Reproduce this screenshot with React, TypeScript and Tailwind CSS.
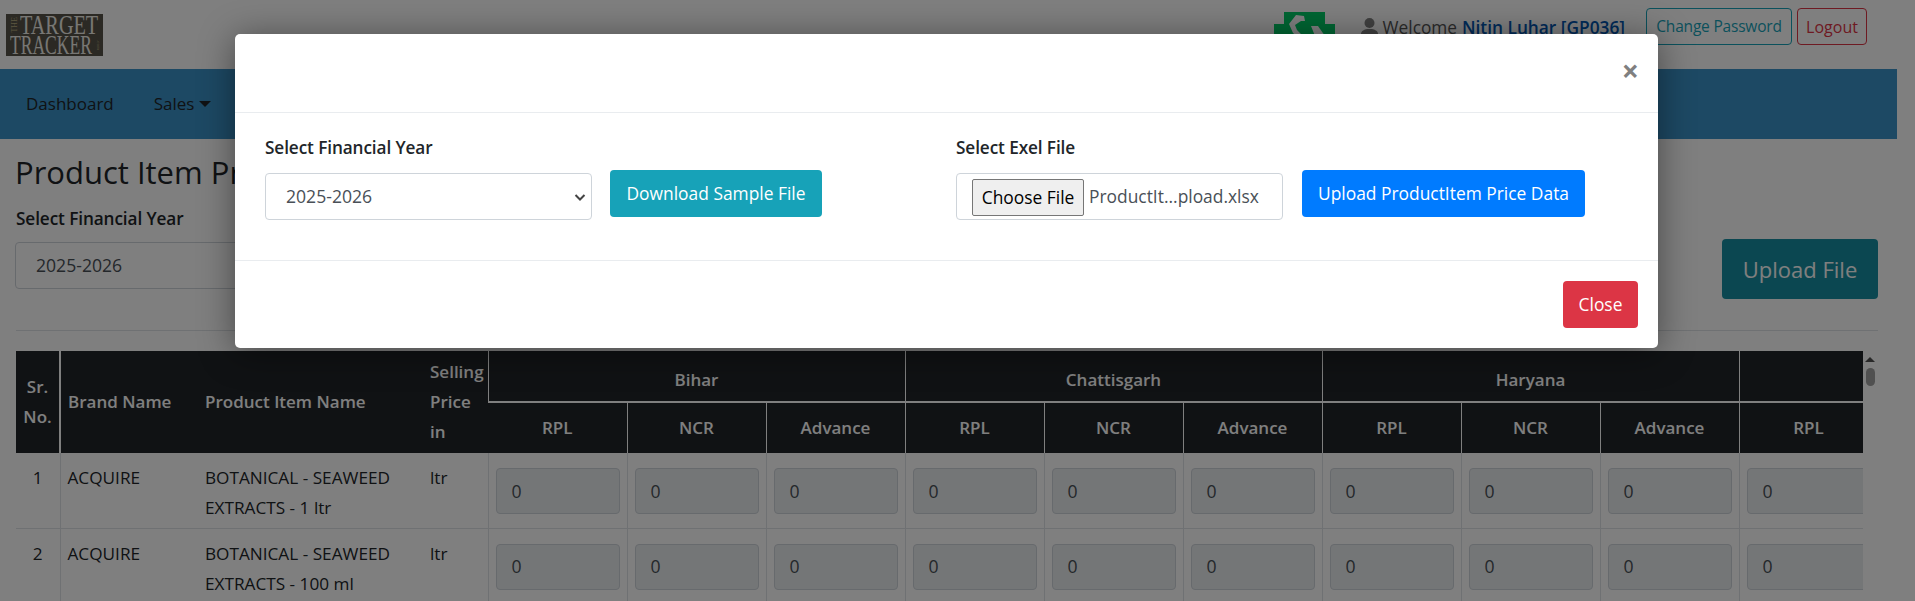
const states = ["Bihar", "Chattisgarh", "Haryana", ""]
const subCols = ["RPL", "NCR", "Advance"]

const rows = [
  { sr: 1, brand: "ACQUIRE", item: "BOTANICAL - SEAWEED EXTRACTS - 1 ltr", unit: "ltr" },
  { sr: 2, brand: "ACQUIRE", item: "BOTANICAL - SEAWEED EXTRACTS - 100 ml", unit: "ltr" },
]

function Logo() {
  return (
    <div className="flex h-[42px] w-[97px] flex-col justify-center bg-[#565248] pl-[4px] font-['Liberation_Serif',serif] text-[#f0efe8]">
      <div className="flex h-[20px] items-center">
        <span className="w-[10px] rotate-180 text-[8px] leading-[10px] text-[#b8ad80] [writing-mode:vertical-rl]">THE</span>
        <span className="origin-left scale-x-[.75] whitespace-nowrap text-[27px] leading-[20px]">TARGET</span>
      </div>
      <div className="flex h-[20px] items-center">
        <span className="w-[86px] origin-left scale-x-[.65] whitespace-nowrap text-[27px] leading-[20px]">TRACKER</span>
        <span className="text-[5px] leading-none text-[#b8ad80] [writing-mode:vertical-rl]">.com</span>
      </div>
    </div>
  )
}

function GreenMark() {
  return (
    <svg width="61" height="30" viewBox="0 0 61 30" className="mt-[12px]">
      <path d="M10 0h41v12h10v18H0V12h10z" fill="#00cc66" />
      <path d="M22 3l-7 9 4 9 6 5 3-3-5-5-2-5 6-4 4 0-1-5z" fill="#fff" />
      <path d="M37 14l7 0 7 10-4 4-6-4z" fill="#fff" />
    </svg>
  )
}

function UserIcon() {
  return (
    <svg width="17" height="20" viewBox="0 0 17 20" className="mr-[5px]">
      <circle cx="8.5" cy="5" r="5" fill="#808080" />
      <path d="M0 20v-4c0-3 3-5 8.5-5s8.5 2 8.5 5v4z" fill="#808080" />
    </svg>
  )
}

export default function App() {
  return (
    <div className="relative h-[601px] overflow-hidden bg-white font-['Open_Sans',sans-serif] text-[17px] leading-[1.5] text-[#212529]">
      <div className="w-[1897px]">
        <header className="flex h-[69px] items-start pl-[6px]">
          <div className="mt-[14px]">
            <Logo />
          </div>
          <div className="ml-auto flex items-start">
            <GreenMark />
            <div className="ml-[26px] mt-[15px] flex items-center text-[17.3px] text-[#555]">
              <UserIcon />
              <span>Welcome</span>
              <b className="ml-[5px] font-semibold text-[#0056b3]">Nitin Luhar [GP036]</b>
            </div>
            <button className="ml-[21px] mt-[8px] h-[37px] w-[146px] rounded border border-[#17a2b8] text-[15.5px] tracking-[-0.2px] text-[#17a2b8]">
              Change Password
            </button>
            <button className="ml-[5px] mr-[30px] mt-[8px] h-[37px] w-[70px] rounded border border-[#dc3545] text-[16px] text-[#dc3545]">
              Logout
            </button>
          </div>
        </header>

        <nav className="flex h-[70px] items-center gap-[40px] bg-[#3a93c8] pl-[26px] text-[17px]">
          <span>Dashboard</span>
          <span className="flex items-center gap-[5px]">
            Sales
            <span className="border-x-[6px] border-t-[6px] border-x-transparent border-t-[#212529]" />
          </span>
        </nav>

        <div className="pl-[16px] pr-[19px]">
          <h2 className="-ml-[1px] mt-[14px] text-[31px] leading-[38px]">Product Item Price</h2>
          <div className="mt-[16px] flex items-start justify-between">
            <div>
              <div className="text-[17.2px] font-semibold leading-[24px] tracking-[-0.1px]">Select Financial Year</div>
              <div className="-ml-[1px] mt-[11px] flex h-[47px] w-[327px] items-center rounded border border-[#ced4da] pl-[20px] text-[17.6px] text-[#495057]">
                2025-2026
              </div>
            </div>
            <button className="mt-[32px] h-[60px] w-[156px] rounded bg-[#178fa2] text-[22px] text-white">
              Upload File
            </button>
          </div>
          <hr className="mt-[31px] border-[#dee2e6]" />

          <div className="mt-[20px] flex">
            <div className="w-[1847px] overflow-hidden">
              <table className="w-[2140px] table-fixed border-collapse text-[17.2px]">
                <colgroup>
                  <col className="w-[44px]" />
                  <col className="w-[138px]" />
                  <col className="w-[225px]" />
                  <col className="w-[65px]" />
                  {Array.from({ length: 12 }).map((_, i) => (
                    <col key={i} className="w-[139px]" />
                  ))}
                </colgroup>
                <thead className="bg-[#212529] text-[17px] text-white">
                  <tr className="h-[51px]">
                    <th rowSpan={2} className="border-r-2 border-white text-center font-semibold leading-[30px]">
                      Sr.
                      <br />
                      No.
                    </th>
                    <th rowSpan={2} className="pl-[7px] text-left font-semibold">Brand Name</th>
                    <th rowSpan={2} className="pl-[7px] text-left font-semibold">Product Item Name</th>
                    <th rowSpan={2} className="whitespace-nowrap pl-[7px] text-left font-semibold leading-[30px]">
                      Selling
                      <br />
                      Price
                      <br />
                      in
                    </th>
                    {states.map((s, i) => (
                      <th key={i} colSpan={3} className="border-b-2 border-l border-white pt-[8px] text-center font-semibold first:border-l-0">
                        {s}
                      </th>
                    ))}
                  </tr>
                  <tr className="h-[51px]">
                    {states.flatMap((_, i) =>
                      subCols.map((c, j) => (
                        <th key={`${i}-${c}`} className={i === 0 && j === 0 ? "text-center font-semibold" : "border-l border-white text-center font-semibold"}>
                          {c}
                        </th>
                      ))
                    )}
                  </tr>
                </thead>
                <tbody>
                  {rows.map((r) => (
                    <tr key={r.sr} className="border-b border-[#dee2e6] align-top">
                      <td className="h-[75px] pt-[10px] text-center leading-[30px]">{r.sr}</td>
                      <td className="border-l border-[#dee2e6] pl-[7px] pt-[10px] leading-[30px]">{r.brand}</td>
                      <td className="pl-[7px] pt-[10px] leading-[30px]">{r.item}</td>
                      <td className="pl-[7px] pt-[10px] leading-[30px]">{r.unit}</td>
                      {Array.from({ length: 12 }).map((_, i) => (
                        <td key={i} className="border-l border-[#dee2e6] px-[7px] pt-[15px]">
                          <div className="flex h-[46px] items-center rounded border border-[#ced4da] bg-[#e9ecef] pl-[15px] text-[17.6px] text-[#495057]">
                            0
                          </div>
                        </td>
                      ))}
                    </tr>
                  ))}
                </tbody>
              </table>
            </div>
            <div className="flex w-[14px] flex-col items-center pt-[6px]">
              <span className="border-x-[5px] border-b-[5px] border-x-transparent border-b-[#505050]" />
              <span className="mt-[6px] h-[18px] w-[9px] rounded-full bg-[#a0a0a0]" />
            </div>
          </div>
        </div>
      </div>

      {/* Backdrop and modal */}
      <div className="absolute inset-0 bg-black/50" />
      <div className="absolute left-[235px] top-[34px] w-[1423px] rounded-[5px] bg-white shadow-[0_4px_36px_rgba(0,0,0,0.45)]">
        <div className="flex h-[79px] items-start justify-end border-b border-[#e9ecef] pr-[19px] pt-[20px]">
          <span className="text-[30px] font-bold leading-[34px] text-[#808080]">×</span>
        </div>
        <div className="flex h-[148px] border-b border-[#e9ecef] pl-[30px] pt-[23px]">
          <div className="w-[691px]">
            <div className="text-[17.2px] font-semibold leading-[24px] tracking-[-0.1px]">Select Financial Year</div>
            <div className="mt-[10px] flex items-start">
              <div className="mt-[3px] flex h-[47px] w-[327px] items-center justify-between rounded border border-[#ced4da] pl-[20px] pr-[5px] text-[17.6px] text-[#495057]">
                2025-2026
                <svg width="12" height="12" viewBox="0 0 12 12" fill="none" stroke="#444" strokeWidth="2">
                  <path d="M1.5 4l4.5 4.5 4.5-4.5" />
                </svg>
              </div>
              <button className="ml-[18px] h-[47px] w-[212px] rounded bg-[#17a2b8] text-[17.4px] text-white">
                Download Sample File
              </button>
            </div>
          </div>
          <div>
            <div className="text-[17.2px] font-semibold leading-[24px] tracking-[-0.1px]">Select Exel File</div>
            <div className="mt-[10px] flex items-start">
              <div className="mt-[3px] flex h-[47px] w-[327px] items-center rounded border border-[#ced4da] pl-[15px] text-[#495057]">
                <span className="mt-[2px] flex h-[37px] w-[112px] items-center justify-center rounded-[2px] border border-[#767676] bg-[#efefef] text-[17.4px] text-black">
                  Choose File
                </span>
                <span className="ml-[5px] text-[17.4px]">ProductIt...pload.xlsx</span>
              </div>
              <button className="ml-[19px] h-[47px] w-[283px] rounded bg-[#007bff] text-[17.4px] text-white">
                Upload ProductItem Price Data
              </button>
            </div>
          </div>
        </div>
        <div className="flex h-[87px] items-start justify-end pr-[20px] pt-[20px]">
          <button className="h-[47px] w-[75px] rounded bg-[#dc3545] text-[17.4px] text-white">Close</button>
        </div>
      </div>
    </div>
  )
}
